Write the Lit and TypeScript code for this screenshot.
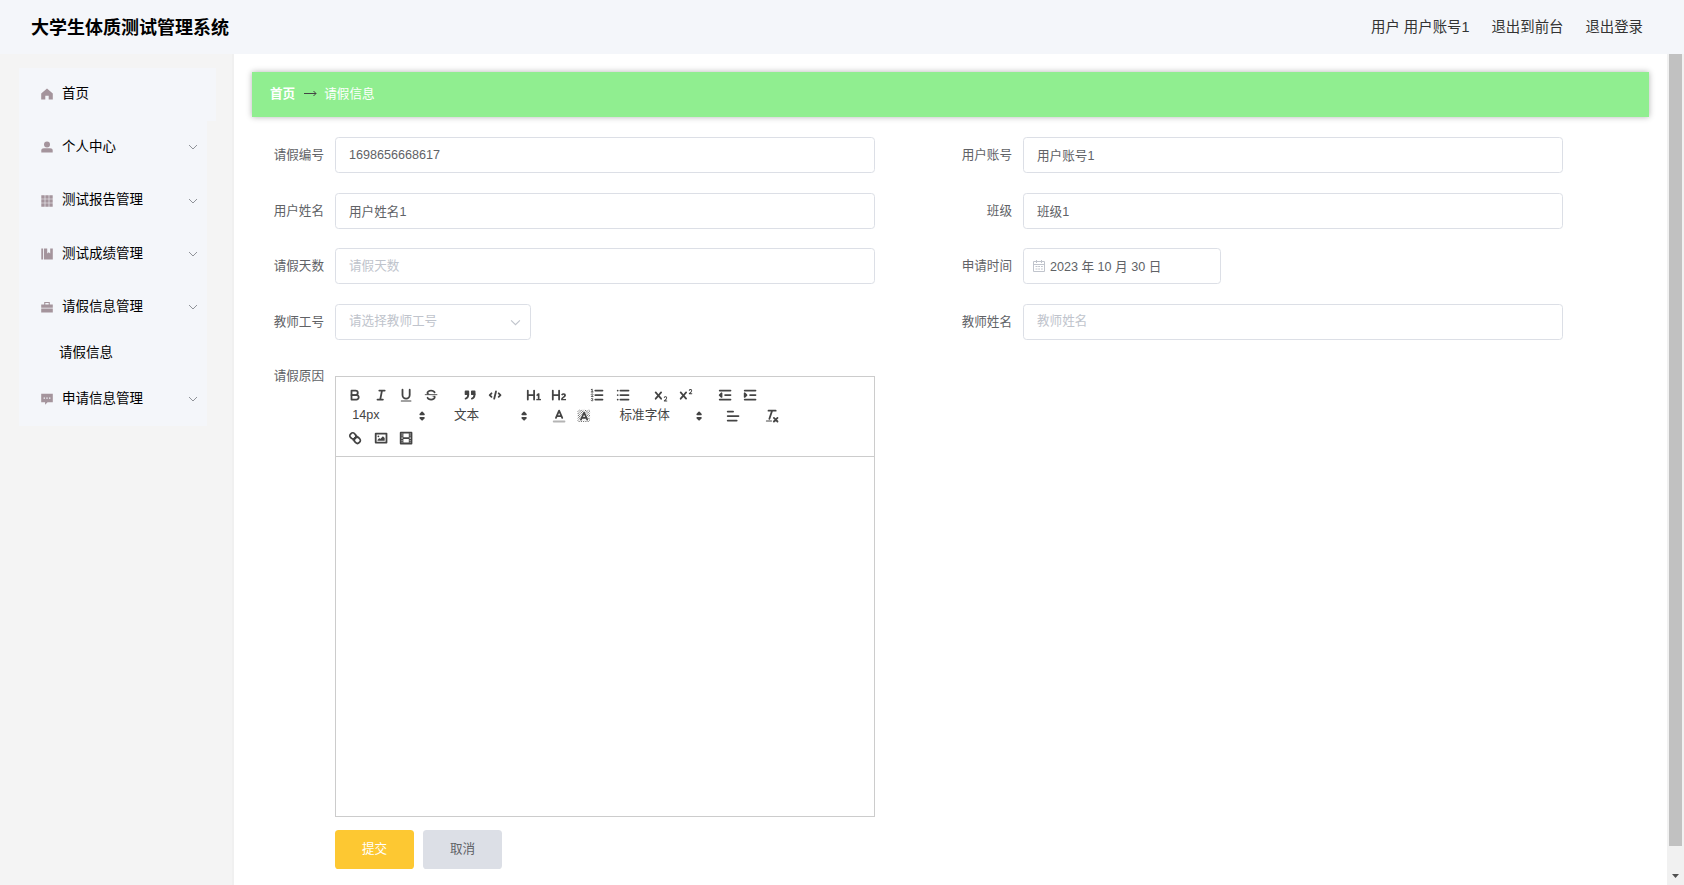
import { LitElement, html, svg, css } from "lit";
import { customElement } from "lit/decorators.js";
import { classMap } from "lit/directives/class-map.js";

const menuIcons: Record<string, unknown> = {
  home: svg`<path d="M6 .4 11.8 5.4V11.4H7.7V7.8H4.3V11.4H.2V5.4Z"/>`,
  user: svg`<circle cx="6" cy="3.4" r="3"/><path d="M.3 11.4V9.6Q.3 7.3 3 7.3H9Q11.7 7.3 11.7 9.6V11.4Z"/>`,
  grid: svg`<path d="M.3.3h3.4v3.4H.3zM4.3.3h3.4v3.4H4.3zM8.3.3h3.4v3.4H8.3zM.3 4.3h3.4v3.4H.3zM4.3 4.3h3.4v3.4H4.3zM8.3 4.3h3.4v3.4H8.3zM.3 8.3h3.4v3.4H.3zM4.3 8.3h3.4v3.4H4.3zM8.3 8.3h3.4v3.4H8.3z"/>`,
  book: svg`<path d="M.3.4H2V11.6H.3zM2.9.4H6.2V5.4L7.7 4.3 9.2 5.4V.4H11.8V11.6H2.9z"/>`,
  bag: svg`<path d="M3.2 3.4V.9H8.8V3.4H11.8V6.7H.2V3.4zM4.3 3.4H7.7V2H4.3zM.2 7.5H11.8V11.5H.2z" fill-rule="evenodd"/>`,
  chat: svg`<path d="M.2.7H11.8V9.3H6.6L4.1 11.7V9.3H.2zM2.6 4.4V5.8H4V4.4zM5.3 4.4V5.8H6.7V4.4zM8 4.4V5.8H9.4V4.4z" fill-rule="evenodd"/>`,
};

const editorIcons: Record<string, unknown> = {
  bold: svg`<path class="s" d="M5,4H9.5A2.5,2.5,0,0,1,12,6.5v0A2.5,2.5,0,0,1,9.5,9H5V4Z"/><path class="s" d="M5,9h5.5A2.5,2.5,0,0,1,13,11.5v0A2.5,2.5,0,0,1,10.5,14H5V9Z"/>`,
  italic: svg`<path class="s" d="M7,4H13M5,14H11M8,14L10,4"/>`,
  underline: svg`<path class="s" d="M5,3V9a4.012,4.012,0,0,0,4,4H9a4.012,4.012,0,0,0,4-4V3"/><rect class="f" height="1" rx=".5" width="12" x="3" y="15"/>`,
  strike: svg`<path class="s n" d="M15.5,8.5H2.5"/><path class="f" d="M9.007,8C6.542,7.791,6,7.519,6,6.5,6,5.792,7.283,5,9,5c1.571,0,2.765.679,2.969,1.309a1,1,0,0,0,1.9-.617C13.356,4.106,11.354,3,9,3,6.2,3,4,4.538,4,6.5a3.2,3.2,0,0,0,.5,1.843Z"/><path class="f" d="M8.984,10C11.457,10.208,12,10.479,12,11.5c0,0.708-1.283,1.5-3,1.5-1.571,0-2.765-.679-2.969-1.309a1,1,0,1,0-1.9.617C4.644,13.894,6.646,15,9,15c2.8,0,5-1.538,5-3.5a3.2,3.2,0,0,0-.5-1.843Z"/>`,
  quote: svg`<rect class="f s" height="3" width="3" x="4" y="5"/><rect class="f s" height="3" width="3" x="11" y="5"/><path class="f s" d="M7,8c0,4.031-3,5-3,5"/><path class="f s" d="M14,8c0,4.031-3,5-3,5"/>`,
  code: svg`<path class="s" d="M5,7L3,9L5,11M13,7L15,9L13,11M10,5L8,13"/>`,
  h1: svg`<path class="f" d="M10,4V14a1,1,0,0,1-2,0V10H3v4a1,1,0,0,1-2,0V4A1,1,0,0,1,3,4V8H8V4a1,1,0,0,1,2,0Zm6.06787,9.209H14.98975V7.59863a.54085.54085,0,0,0-.605-.60547h-.62744a1.01119,1.01119,0,0,0-.748.29688L11.645,8.56641a.5435.5435,0,0,0-.022.8584l.28613.30762a.53861.53861,0,0,0,.84717.0332l.09912-.08789a1.2137,1.2137,0,0,0,.2417-.35254h.02246s-.01123.30859-.01123.60547V13.209H12.041a.54085.54085,0,0,0-.605.60547v.43945a.54085.54085,0,0,0,.605.60547h4.02686a.54085.54085,0,0,0,.605-.60547v-.43945A.54085.54085,0,0,0,16.06787,13.209Z"/>`,
  h2: svg`<path class="f" d="M16.73975,13.81445v.43945a.54085.54085,0,0,1-.605.60547H11.855a.58392.58392,0,0,1-.64893-.60547V14.0127c0-2.90527,3.39941-3.42187,3.39941-4.55469a.77675.77675,0,0,0-.84717-.78125,1.17684,1.17684,0,0,0-.83594.38477c-.2749.26367-.561.374-.85791.13184l-.4292-.34082c-.30811-.24219-.38525-.51758-.1543-.81445a2.97155,2.97155,0,0,1,2.45361-1.17676,2.45393,2.45393,0,0,1,2.68408,2.40918c0,2.45312-3.1792,2.92676-3.27832,3.93848h2.79443A.54085.54085,0,0,1,16.73975,13.81445ZM9,3A.99974.99974,0,0,0,8,4V8H3V4A1,1,0,0,0,1,4V14a1,1,0,0,0,2,0V10H8v4a1,1,0,0,0,2,0V4A.99974.99974,0,0,0,9,3Z"/>`,
  ordered: svg`<path class="s" d="M7,4H15M7,9H15M7,14H15"/><path class="s n" d="M2.5,5.5H4.5"/><path class="f" d="M3.5,6A0.5,0.5,0,0,1,3,5.5V3.085l-0.276.138A0.5,0.5,0,0,1,2.053,3c-0.124-.247-0.023-0.324.224-0.447l1-.5A0.5,0.5,0,0,1,4,2.5v3A0.5,0.5,0,0,1,3.5,6Z"/><path class="s n" d="M4.5,10.5h-2c0-.234,1.85-1.076,1.85-2.234A0.959,0.959,0,0,0,2.5,8.156"/><path class="s n" d="M2.5,14.846a0.959,0.959,0,0,0,1.85-.109A0.7,0.7,0,0,0,3.75,14a0.688,0.688,0,0,0,.6-0.736,0.959,0.959,0,0,0-1.85-.109"/>`,
  bullet: svg`<path class="s" d="M6,4H15M6,9H15M6,14H15M3,4H3M3,9H3M3,14H3"/>`,
  sub: svg`<path class="f" d="M15.5,15H13.861a3.858,3.858,0,0,0,1.914-2.975,1.8,1.8,0,0,0-1.6-1.751A1.921,1.921,0,0,0,12.021,11.7a0.50013,0.50013,0,1,0,.957.291h0a0.914,0.914,0,0,1,1.053-.725,0.81,0.81,0,0,1,.744.762c0,1.076-1.16971,1.86982-1.93971,2.43082A1.45639,1.45639,0,0,0,12,15.5a0.5,0.5,0,0,0,.5.5h3A0.5,0.5,0,0,0,15.5,15Z"/><path class="f" d="M9.65,5.241a1,1,0,0,0-1.409.108L6,7.964,3.759,5.349A1,1,0,0,0,2.192,6.59178Q2.21541,6.6213,2.241,6.649L4.684,9.5,2.241,12.35A1,1,0,0,0,3.71,13.70722q0.02557-.02768.049-0.05722L6,11.036,8.241,13.65a1,1,0,1,0,1.567-1.24277Q9.78459,12.3777,9.759,12.35L7.316,9.5,9.759,6.651A1,1,0,0,0,9.65,5.241Z"/>`,
  sup: svg`<path class="f" d="M15.5,7H13.861a4.015,4.015,0,0,0,1.914-2.975,1.8,1.8,0,0,0-1.6-1.751A1.922,1.922,0,0,0,12.021,3.7a0.5,0.5,0,1,0,.957.291,0.917,0.917,0,0,1,1.053-.725,0.81,0.81,0,0,1,.744.762c0,1.077-1.164,1.925-1.934,2.486A1.423,1.423,0,0,0,12,7.5a0.5,0.5,0,0,0,.5.5h3A0.5,0.5,0,0,0,15.5,7Z"/><path class="f" d="M9.651,5.241a1,1,0,0,0-1.41.108L6,7.964,3.759,5.349a1,1,0,1,0-1.519,1.3L4.683,9.5,2.241,12.35a1,1,0,1,0,1.519,1.3L6,11.036,8.241,13.65a1,1,0,0,0,1.519-1.3L7.317,9.5,9.759,6.651A1,1,0,0,0,9.651,5.241Z"/>`,
  outdent: svg`<path class="s" d="M3,14H15M3,4H15M9,9H15"/><path class="f s" d="M5,7V11L3,9Z"/>`,
  indent: svg`<path class="s" d="M3,14H15M3,4H15M9,9H15"/><path class="f s" d="M3,7V11L5,9Z"/>`,
  color: svg`<path class="s faint" d="M3,15H15"/><path class="s" d="M5.5,11L9,3L12.5,11M11.63,9H6.38"/>`,
  background: svg`<path class="hatch" d="M2 4L4 2M2 6.5L6.5 2M2 9L9 2M2 11.500L11.5 2M2 14L14 2M3 15.500L15.5 3M5.500 15.500L15.5 5.500M8 15.500L15.5 8M10.500 15.500L15.5 10.500M13 15.500L15.5 13"/><path class="halo" d="M5.500,13L9,5L12.500,13Z"/><path class="s" d="M5.500,13L9,5L12.500,13M11.630,11H6.380"/>`,
  align: svg`<path class="s" d="M3,9H15M3,14H13M3,4H9"/>`,
  clean: svg`<path class="s" d="M5,3H13M6,12L9,3"/><path class="s" d="M11,11L15,15M15,11L11,15"/><rect class="f" height="1" rx=".5" width="7" x="2" y="14"/>`,
  link: svg`<path class="s" d="M7,11L11,7"/><path class="s" d="M8.9,4.577a3.476,3.476,0,0,1,.36,4.679A3.476,3.476,0,0,1,4.577,8.9C3.185,7.5,2.035,6.4,4.217,4.217S7.5,3.185,8.9,4.577Z"/><path class="s" d="M13.423,9.1a3.476,3.476,0,0,0-4.679-.36,3.476,3.476,0,0,0,.36,4.679c1.392,1.392,2.5,2.542,4.679.36S14.815,10.5,13.423,9.1Z"/>`,
  image: svg`<rect class="s" height="10" width="12" x="3" y="4"/><circle class="f" cx="6" cy="7" r="1"/><path class="f" d="M5,12V11L7,9L8,10L11,7L13,9V12Z"/>`,
  video: svg`<rect class="s" height="12" width="12" x="3" y="3"/><path class="f" d="M5,3h1v12H5zM12,3h1v12h-1zM5,8H13V10H5zM3,5h3v1H3zM3,7h3v1H3zM3,10h3v1H3zM3,12h3v1H3zM12,5h3v1h-3zM12,7h3v1h-3zM12,10h3v1h-3zM12,12h3v1h-3z"/>`,
  updown: svg`<path class="f s" d="M7,11L9,13L11,11ZM7,7L9,5L11,7Z"/>`,
};

@customElement("rich-editor")
export class RichEditor extends LitElement {
  static styles = css`
    :host { display: flex; flex-direction: column; box-sizing: border-box; width: 540px; height: 441px; border: 1px solid #ccc;
      font: 12.6px "Liberation Sans", "Noto Sans CJK SC", sans-serif; color: #444; }
    .toolbar { padding: 7.2px; border-bottom: 1px solid #ccc; height: 64.6px; }
    .row { display: flex; column-gap: 13.5px; height: 21.6px; }
    .group { display: flex; height: 21.6px; }
    .tool { box-sizing: border-box; width: 25.2px; height: 21.6px; padding: 2.7px 4.2px; border: 0; background: none; }
    svg { display: block; width: 16.2px; height: 16.2px; }
    .picker { display: flex; align-items: center; justify-content: space-between; box-sizing: border-box; height: 21.6px; padding: 0 .9px 0 9px; width: 88.2px; }
    .wide { width: 97.2px; }
    .picker span { line-height: 19px; margin-top: -2px; }
    .s { fill: none; stroke: #444; stroke-width: 2; stroke-linecap: round; stroke-linejoin: round; }
    .n { stroke-width: 1; }
    .f, .f.s { fill: #444; }
    .faint { opacity: .4; }
    .hatch { fill: none; stroke: #444; stroke-width: 1; stroke-dasharray: 1.6 .7; }
    .halo { fill: #fff; stroke: #fff; stroke-width: 3; opacity: .75; }
    .body { flex: 1; }
  `;
  private icon(n: string) { return html`<svg viewBox="0 0 18 18">${editorIcons[n]}</svg>`; }
  private tools(...names: string[]) {
    return html`<div class="group">${names.map((n) => html`<button class="tool" aria-label=${n}>${this.icon(n)}</button>`)}</div>`;
  }
  private picker(label: string, wide = false) {
    return html`<div class=${classMap({ picker: true, wide })}><span>${label}</span>${this.icon("updown")}</div>`;
  }
  render() {
    return html`
      <div class="toolbar">
        <div class="row">
          ${this.tools("bold", "italic", "underline", "strike")}
          ${this.tools("quote", "code")}
          ${this.tools("h1", "h2")}
          ${this.tools("ordered", "bullet")}
          ${this.tools("sub", "sup")}
          ${this.tools("outdent", "indent")}
        </div>
        <div class="row">
          ${this.picker("14px")}
          ${this.picker("文本")}
          ${this.tools("color", "background")}
          ${this.picker("标准字体", true)}
          ${this.tools("align")}
          ${this.tools("clean")}
        </div>
        <div class="row">${this.tools("link", "image", "video")}</div>
      </div>
      <div class="body"></div>`;
  }
}

interface MenuEntry { icon: string; label: string; children?: string[]; leaf?: boolean }

const menu: MenuEntry[] = [
  { icon: "home", label: "首页", leaf: true },
  { icon: "user", label: "个人中心" },
  { icon: "grid", label: "测试报告管理" },
  { icon: "book", label: "测试成绩管理" },
  { icon: "bag", label: "请假信息管理", children: ["请假信息"] },
  { icon: "chat", label: "申请信息管理" },
];

@customElement("app-root")
export class AppRoot extends LitElement {
  static styles = css`
    :host { display: flex; flex-direction: column; width: 100%; height: 100vh; overflow: hidden; background: #fff;
      font: 12.6px "Liberation Sans", "Noto Sans CJK SC", sans-serif; color: #606266; }
    * { box-sizing: border-box; }
    .header { display: flex; justify-content: space-between; align-items: center; flex: none; height: 54px; padding: 0 41px 1px 31px; background: #f4f6fa; }
    .title { font-size: 18px; font-weight: 700; color: #000; line-height: 26px; padding-top: 2px; }
    .links { display: flex; gap: 22px; font-size: 14.4px; line-height: 22px; color: #333; }
    .page { display: flex; flex: 1; min-height: 0; }
    .sidebar { flex: none; width: 234px; padding: 14px 0 0 19px; background: #f4f4f4; border-right: 2px solid #f0f0f0; }
    .item { display: flex; align-items: center; width: 188px; height: 53.3px; padding: 0 9px 2px 21.5px; background: #f4f6fa; color: #000; font-size: 13.5px; line-height: 20px; }
    .leaf { width: 197px; }
    .item .ico { width: 12px; height: 12px; fill: #a4949c; margin: .6px 9.5px 0 0; flex: none; }
    .item .chev { width: 10px; height: 10px; margin: .6px 0 0 auto; }
    .chev { fill: none; stroke: #909399; stroke-width: 1; }
    .sub { width: 188px; height: 38.6px; padding: 8.6px 0 0 40px; background: #f4f6fa; color: #000; font-size: 13.5px; line-height: 20px; }
    .main { flex: 1; padding: 18px 18px 0; }
    .crumbs { display: flex; align-items: center; height: 45px; padding: 0 18px 2px; background: #90ee90; box-shadow: 0 0 6px rgba(0, 0, 0, .3); color: #fff; line-height: 20px; }
    .arrow { width: 13px; height: 7px; margin: 0 7.5px 0 8.5px; fill: none; stroke: #444; stroke-width: 1; }
    .form { display: grid; grid-template-columns: 688px 688px; row-gap: 19.6px; padding-top: 20px; }
    .field { display: flex; height: 36px; }
    .label { width: 83px; padding-right: 11px; text-align: right; line-height: 36px; }
    .box { display: flex; align-items: center; width: 540px; height: 36px; padding: 0 13px .8px; border: 1px solid #dcdfe6; border-radius: 3.6px; background: #fff; }
    .date { width: 198px; padding-left: 8.5px; }
    .date .cal { width: 12px; height: 12px; margin-right: 5.5px; flex: none; fill: none; stroke: #c0c4cc; }
    .select { width: 196px; padding-right: 9.5px; }
    .select .chev { width: 11px; height: 11px; stroke: #c0c4cc; flex: none; margin-top: 3px; }
    .input { flex: 1; min-width: 0; width: 100%; padding: 0; border: 0; outline: 0; background: none; font: inherit; color: #606266; height: 20px; }
    .input::placeholder { color: #c0c4cc; opacity: 1; }
    .reason { height: 441px; margin-top: 16.6px; }
    .reason .label { margin-top: -18px; }
    .reason-wrap { grid-column: 1 / 3; height: 457.6px; display: flex; }
    .actions { display: flex; gap: 9px; padding: 13px 0 0 83px; }
    .btn { width: 79px; height: 39px; padding: 0 0 4px; border: 0; border-radius: 3.6px; font: inherit; background: #dcdfe6; color: #606266; }
    .primary { background: #fdc832; color: #fff; }
    .scroll { display: flex; flex-direction: column; align-items: center; justify-content: space-between; flex: none; width: 17px; padding-bottom: 7px; background: #f1f1f1; }
    .thumb { width: 13px; height: 792px; background: #c1c1c1; }
    .down { width: 7px; height: 4px; fill: #505050; }
  `;

  private chevron() {
    return html`<svg class="chev" viewBox="0 0 10 10"><path d="M1 3 5 7 9 3" /></svg>`;
  }

  private field(label: string, value: string, placeholder = "") {
    return html`<div class="field"><label class="label">${label}</label>
      <div class="box"><input class="input" .value=${value} placeholder=${placeholder} /></div></div>`;
  }

  render() {
    return html`
      <div class="header">
        <div class="title">大学生体质测试管理系统</div>
        <div class="links"><span>用户 用户账号1</span><span>退出到前台</span><span>退出登录</span></div>
      </div>
      <div class="page">
        <nav class="sidebar">
          ${menu.map((m) => html`
            <div class=${classMap({ item: true, leaf: !!m.leaf })}>
              <svg class="ico" viewBox="0 0 12 12">${menuIcons[m.icon]}</svg>${m.label}
              ${m.leaf ? "" : this.chevron()}
            </div>
            ${(m.children ?? []).map((c) => html`<div class="sub">${c}</div>`)}`)}
        </nav>
        <main class="main">
          <div class="crumbs">
            <b>首页</b>
            <svg class="arrow" viewBox="0 0 13 7"><path d="M0 3.5H12M9.5 1 12 3.5 9.5 6" /></svg>
            <span>请假信息</span>
          </div>
          <div class="form">
            ${this.field("请假编号", "1698656668617")}
            ${this.field("用户账号", "用户账号1")}
            ${this.field("用户姓名", "用户姓名1")}
            ${this.field("班级", "班级1")}
            ${this.field("请假天数", "", "请假天数")}
            <div class="field"><label class="label">申请时间</label>
              <div class="box date">
                <svg class="cal" viewBox="0 0 12 12"><path d="M.5 1.5H11.5V11.5H.5ZM.5 4.5H11.5M3.5 0V3M8.5 0V3M2.5 6.5H4.5M5.2 6.5H7M8 6.5H9.8M2.5 9H4.5M5.2 9H7M8 9H9.8" /></svg>
                <input class="input" .value=${"2023 年 10 月 30 日"} />
              </div></div>
            <div class="field"><label class="label">教师工号</label>
              <div class="box select"><input class="input" placeholder="请选择教师工号" />${this.chevron()}</div></div>
            ${this.field("教师姓名", "", "教师姓名")}
            <div class="reason-wrap"><div class="field reason"><label class="label">请假原因</label><rich-editor></rich-editor></div></div>
          </div>
          <div class="actions"><button class="btn primary">提交</button><button class="btn">取消</button></div>
        </main>
        <div class="scroll">
          <div class="thumb"></div>
          <svg class="down" viewBox="0 0 7 4"><path d="M0 0H7L3.5 4Z" /></svg>
        </div>
      </div>`;
  }
}
